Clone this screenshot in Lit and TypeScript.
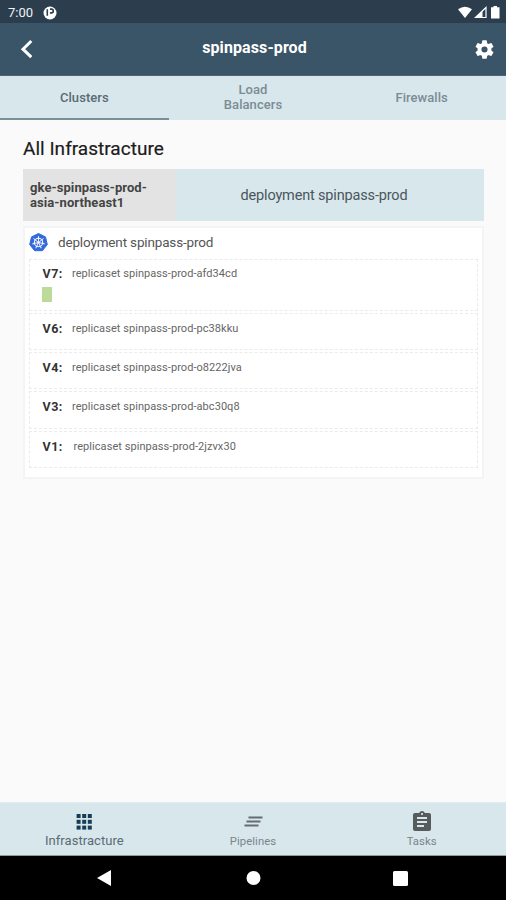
import { LitElement, html, css, svg } from "lit";
import { customElement } from "lit/decorators.js";
import { styleMap } from "lit/directives/style-map.js";

interface ReplicaSet {
  version: string;
  name: string;
  height: number;
  gap: number;
  top: number;
  indent?: number;
  pods?: number;
}

const REPLICA_SETS: ReplicaSet[] = [
  { version: "V7:", name: "replicaset spinpass-prod-afd34cd", height: 52, gap: 2, top: 7, pods: 1 },
  { version: "V6:", name: "replicaset spinpass-prod-pc38kku", height: 37, gap: 2, top: 8 },
  { version: "V4:", name: "replicaset spinpass-prod-o8222jva", height: 37, gap: 2, top: 8 },
  { version: "V3:", name: "replicaset spinpass-prod-abc30q8", height: 38, gap: 2, top: 8 },
  { version: "V1:", name: "replicaset spinpass-prod-2jzvx30", height: 37, gap: 0, top: 8, indent: 1.5 },
];

@customElement("app-root")
export class AppRoot extends LitElement {
  static styles = css`
    :host {
      display: flex;
      flex-direction: column;
      width: 506px;
      height: 900px;
      background: #fafafa;
      font-family: Roboto, "Liberation Sans", sans-serif;
      color: #3f4447;
      overflow: hidden;
    }
    * { box-sizing: border-box; }
    svg { display: block; flex: none; }
    .status {
      height: 23px;
      background: #2c3e4e;
      display: flex;
      align-items: center;
      padding: 2px 5px 0 8px;
      color: #f1f4f6;
      font-size: 13px;
    }
    .status .dot { margin-left: 10px; }
    .status .sys { margin-left: auto; display: flex; gap: 2px; }
    .bar {
      height: 53px;
      background: #3a5468;
      border-bottom: 1px solid #4d6576;
      display: grid;
      grid-template-columns: 40px 1fr 40px;
      align-items: center;
      color: #fff;
    }
    .bar .title {
      text-align: center;
      font-size: 16px;
      line-height: 20px;
      font-weight: 700;
      letter-spacing: 0.1px;
      padding: 0 0 3px 3px;
    }
    .bar .back { margin-left: 19px; }
    .bar .gear { margin-left: 6.5px; }
    .tabs {
      height: 44px;
      background: #d7e7ec;
      display: grid;
      grid-template-columns: repeat(3, 1fr);
      font-size: 13px;
      line-height: 15px;
      letter-spacing: 0.06px;
      font-weight: 500;
      color: #7b8c94;
    }
    .tab {
      display: flex;
      align-items: center;
      justify-content: center;
      text-align: center;
      border-bottom: 2px solid transparent;
    }
    .tab.active { color: #5a6b74; border-color: #789097; }
    main { flex: 1; padding: 16px 22px 0 23px; }
    h1 {
      margin: 0;
      font-size: 19px;
      line-height: 24px;
      font-weight: 400;
      letter-spacing: 0.02px;
      color: #1c1c1c;
      padding-top: 1px;
      height: 24px;
      -webkit-text-stroke: 0.2px #1c1c1c;
    }
    .cluster { display: flex; height: 52px; margin-top: 9px; }
    .cluster .name {
      width: 153px;
      background: #e3e3e3;
      padding: 11px 0 0 7px;
      font-size: 13px;
      line-height: 15px;
      font-weight: 700;
      letter-spacing: 0.08px;
      color: #444;
    }
    .cluster .deployment {
      flex: 1;
      background: #d7e7ec;
      display: flex;
      align-items: center;
      justify-content: center;
      padding-right: 12px;
      font-size: 14.5px;
      letter-spacing: -0.16px;
      color: #4b565b;
    }
    .card {
      margin-top: 5px;
      height: 253px;
      background: #fff;
      border: 2px solid #f4f4f4;
      padding: 0 4px;
    }
    .head {
      height: 31px;
      padding-bottom: 2px;
      display: flex;
      align-items: center;
      gap: 10px;
      font-size: 13.5px;
      letter-spacing: -0.16px;
      color: #555;
    }
    .head span { padding-bottom: 2px; }
    .row {
      border: 1px dashed #ebebeb;
      padding-left: 12.5px;
    }
    .line { display: flex; line-height: 14px; }
    .version {
      width: 29.5px;
      font-size: 12.5px;
      font-weight: 700;
      letter-spacing: 0.5px;
      color: #333;
    }
    .set { font-size: 11px; letter-spacing: 0.06px; color: #666; }
    .pod { width: 10px; height: 15px; margin: 6px 0 0 -0.5px; background: #bddb98; }
    .nav {
      height: 54px;
      background: #d7e7ec;
      border-top: 1px solid #e2edf0;
      border-bottom: 1px solid #8e9a9e;
      display: grid;
      grid-template-columns: repeat(3, 1fr);
      color: #7a8589;
    }
    .item {
      display: flex;
      flex-direction: column;
      align-items: center;
      padding-top: 7px;
      font-size: 11.3px;
      line-height: 14px;
      letter-spacing: 0.06px;
    }
    .item span { margin-top: 1px; }
    .item.active { color: #5a6b74; font-size: 13px; }
    .item.active span { margin-top: 0; }
    .system {
      height: 44px;
      background: #000;
      display: flex;
      align-items: center;
      justify-content: center;
      padding-right: 1px;
    }
    .system .home { margin: 0 132px 0 134px; }
  `;

  private renderRow(r: ReplicaSet) {
    return html`
      <div class="row" style=${styleMap({
        height: `${r.height}px`,
        marginBottom: `${r.gap}px`,
        paddingTop: `${r.top}px`,
      })}>
        <div class="line">
          <span class="version">${r.version}</span>
          <span class="set" style=${styleMap({ marginLeft: `${r.indent ?? 0}px` })}>${r.name}</span>
        </div>
        ${r.pods ? html`<div class="pod"></div>` : null}
      </div>
    `;
  }

  render() {
    return html`
      <div class="status">
        <span>7:00</span>
        <svg class="dot" width="14" height="14" viewBox="0 0 14 14">
          <circle cx="7" cy="7" r="6.5" fill="#fff" />
          <path d="M4.3 3.3v6.4M7 3.1h1.4a1.9 1.9 0 0 1 0 3.8H7" fill="none" stroke="#2c3e4e" stroke-width="1.6" />
        </svg>
        <div class="sys">
          <svg width="14" height="13" viewBox="0 0 14 13"><path d="M0 3.3Q7-1.8 14 3.3L7 12z" fill="#fff" /></svg>
          <svg width="13" height="13" viewBox="0 0 13 13">
            <path d="M12 1.5v10H1.5z" fill="none" stroke="#fff" stroke-width="1.2" />
            <path d="M8.5 5v7H1z" fill="#fff" />
          </svg>
          <svg width="12" height="13" viewBox="0 0 12 13"><path d="M4.5 0h3.5v1.3H10.5V12.5H2V1.3h2.5z" fill="#fff" /></svg>
        </div>
      </div>
      <div class="bar">
        <svg class="back" width="16" height="20" viewBox="0 0 16 20">
          <path d="M12.3 2 4 10.2l8.3 7.9" fill="none" stroke="#fff" stroke-width="3" />
        </svg>
        <div class="title">spinpass-prod</div>
        <svg class="gear" width="23" height="23" viewBox="0 0 24 24" fill="#fff">
          <path d="M19.14 12.94c.04-.3.06-.61.06-.94 0-.32-.02-.64-.07-.94l2.03-1.58a.49.49 0 0 0 .12-.61l-1.92-3.32a.49.49 0 0 0-.59-.22l-2.39.96a7.03 7.03 0 0 0-1.62-.94l-.36-2.54a.48.48 0 0 0-.48-.41h-3.84a.47.47 0 0 0-.47.41l-.36 2.54c-.59.24-1.13.57-1.62.94l-2.39-.96a.48.48 0 0 0-.59.22L2.74 8.87a.47.47 0 0 0 .12.61l2.03 1.58c-.05.3-.09.63-.09.94s.02.64.07.94l-2.03 1.58a.49.49 0 0 0-.12.61l1.92 3.32c.12.22.37.29.59.22l2.39-.96c.5.38 1.03.7 1.62.94l.36 2.54c.05.24.24.41.48.41h3.84c.24 0 .44-.17.47-.41l.36-2.54c.59-.24 1.13-.56 1.62-.94l2.39.96c.22.08.47 0 .59-.22l1.92-3.32a.47.47 0 0 0-.12-.61zM12 15.2a3.2 3.2 0 1 1 0-6.4 3.2 3.2 0 0 1 0 6.4z" />
        </svg>
      </div>
      <div class="tabs">
        <div class="tab active">Clusters</div>
        <div class="tab">Load<br />Balancers</div>
        <div class="tab">Firewalls</div>
      </div>
      <main>
        <h1>All Infrastracture</h1>
        <div class="cluster">
          <div class="name">gke-spinpass-prod-<br />asia-northeast1</div>
          <div class="deployment">deployment spinpass-prod</div>
        </div>
        <div class="card">
          <div class="head">
            <svg width="19" height="19" viewBox="-9.5 -9.5 19 19">
              <path d="M0-9 7-5.6 8.8 2 3.9 8.2H-3.9L-8.8 2-7-5.6z" fill="#3269dc" stroke="#3269dc" stroke-linejoin="round" />
              <circle r="4.2" fill="none" stroke="#fff" stroke-width="1.1" />
              ${[0, 1, 2, 3, 4, 5, 6].map(
                (i) => svg`<path d="M0-1V-6.4" stroke="#fff" stroke-width=".9" transform="rotate(${(i * 360) / 7})" />`,
              )}
              <circle r="1.3" fill="#fff" />
            </svg>
            <span>deployment spinpass-prod</span>
          </div>
          ${REPLICA_SETS.map((r) => this.renderRow(r))}
        </div>
      </main>
      <div class="nav">
        <div class="item active">
          <svg width="24" height="24" viewBox="0 0 24 24" fill="#173c57">
            ${[4, 9.8, 15.6].map((y) => [4.6, 10.2, 15.8].map((x) => svg`<rect x=${x} y=${y} width="4" height="4" />`))}
          </svg>
          <span>Infrastracture</span>
        </div>
        <div class="item">
          <svg width="24" height="24" viewBox="0 0 24 24">
            <path d="M7.5 7.5h14M5.5 11.5h14M3.5 15.5h14" stroke="#666d70" stroke-width="2" />
          </svg>
          <span>Pipelines</span>
        </div>
        <div class="item">
          <svg width="24" height="24" viewBox="0 0 24 24" fill="#565b5e">
            <path d="M19 3h-4.18C14.4 1.84 13.3 1 12 1s-2.4.84-2.82 2H5c-1.1 0-2 .9-2 2v14c0 1.1.9 2 2 2h14c1.1 0 2-.9 2-2V5c0-1.1-.9-2-2-2zm-7 0c.55 0 1 .45 1 1s-.45 1-1 1-1-.45-1-1 .45-1 1-1zm2 14H7v-2h7v2zm3-4H7v-2h10v2zm0-4H7V7h10v2z" />
          </svg>
          <span>Tasks</span>
        </div>
      </div>
      <div class="system">
        <svg width="15" height="16" viewBox="0 0 15 16"><path d="M14 0v16L0 8z" fill="#fff" /></svg>
        <svg class="home" width="15" height="14" viewBox="0 0 15 14"><circle cx="7.5" cy="7" r="7" fill="#fff" /></svg>
        <svg width="15" height="15" viewBox="0 0 15 15"><rect width="15" height="15" rx="1.5" fill="#fff" /></svg>
      </div>
    `;
  }
}
